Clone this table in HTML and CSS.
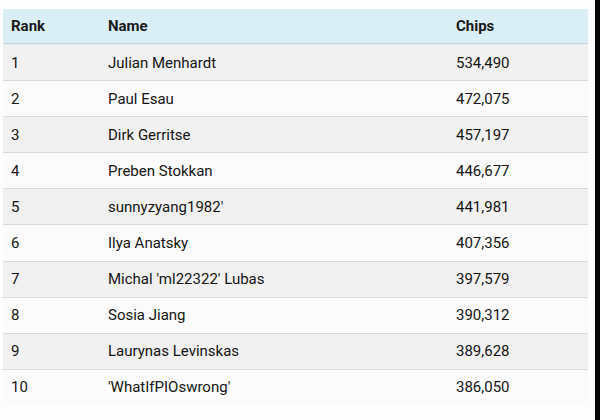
FILE: index.html
```html
<!DOCTYPE html>
<html lang="en">
<head>
<meta charset="utf-8">
<title>Chip counts</title>
<link rel="stylesheet" href="styles.css">
</head>
<body>
<div class="page">
  <div class="table">
    <div class="row head"><div>Rank</div><div>Name</div><div>Chips</div></div>
    <div class="row odd"><div>1</div><div>Julian Menhardt</div><div>534,490</div></div>
    <div class="row even"><div>2</div><div>Paul Esau</div><div>472,075</div></div>
    <div class="row odd"><div>3</div><div>Dirk Gerritse</div><div>457,197</div></div>
    <div class="row even"><div>4</div><div>Preben Stokkan</div><div>446,677</div></div>
    <div class="row odd"><div>5</div><div>sunnyzyang1982'</div><div>441,981</div></div>
    <div class="row even"><div>6</div><div>Ilya Anatsky</div><div>407,356</div></div>
    <div class="row odd"><div>7</div><div>Michal 'ml22322' Lubas</div><div>397,579</div></div>
    <div class="row even"><div>8</div><div>Sosia Jiang</div><div>390,312</div></div>
    <div class="row odd"><div>9</div><div>Laurynas Levinskas</div><div>389,628</div></div>
    <div class="row even"><div>10</div><div>'WhatIfPIOswrong'</div><div>386,050</div></div>
  </div>
</div>
<div class="edge"></div>
</body>
</html>
```
FILE: styles.css
```css
html, body {
  margin: 0;
  height: 100%;
}
body {
  display: flex;
  background: #fdfdfd;
  font-family: Roboto, "Liberation Sans", sans-serif;
  font-size: 15px;
  color: #151515;
}
.page {
  flex: 1;
  padding: 9px 7px 0 3px;
}
.edge {
  width: 5px;
  background: #050505;
}
.table {
  display: flex;
  flex-direction: column;
}
.row {
  display: grid;
  grid-template-columns: 97px 348px 1fr;
  align-items: center;
  height: 36.1px;
  border-top: 1px solid #dadada;
  box-sizing: border-box;
}
.row > div {
  padding-left: 8px;
}
.head {
  height: 35px;
  border-top: none;
  border-bottom: 1px solid #c9d6db;
  background: #d9eef5;
  font-weight: 700;
  color: #1a1a1a;
}
.head + .row {
  border-top: 1px solid #e6eef1;
}
.odd {
  background: #f1f1f1;
}
.even {
  background: #fbfbfb;
}
```
